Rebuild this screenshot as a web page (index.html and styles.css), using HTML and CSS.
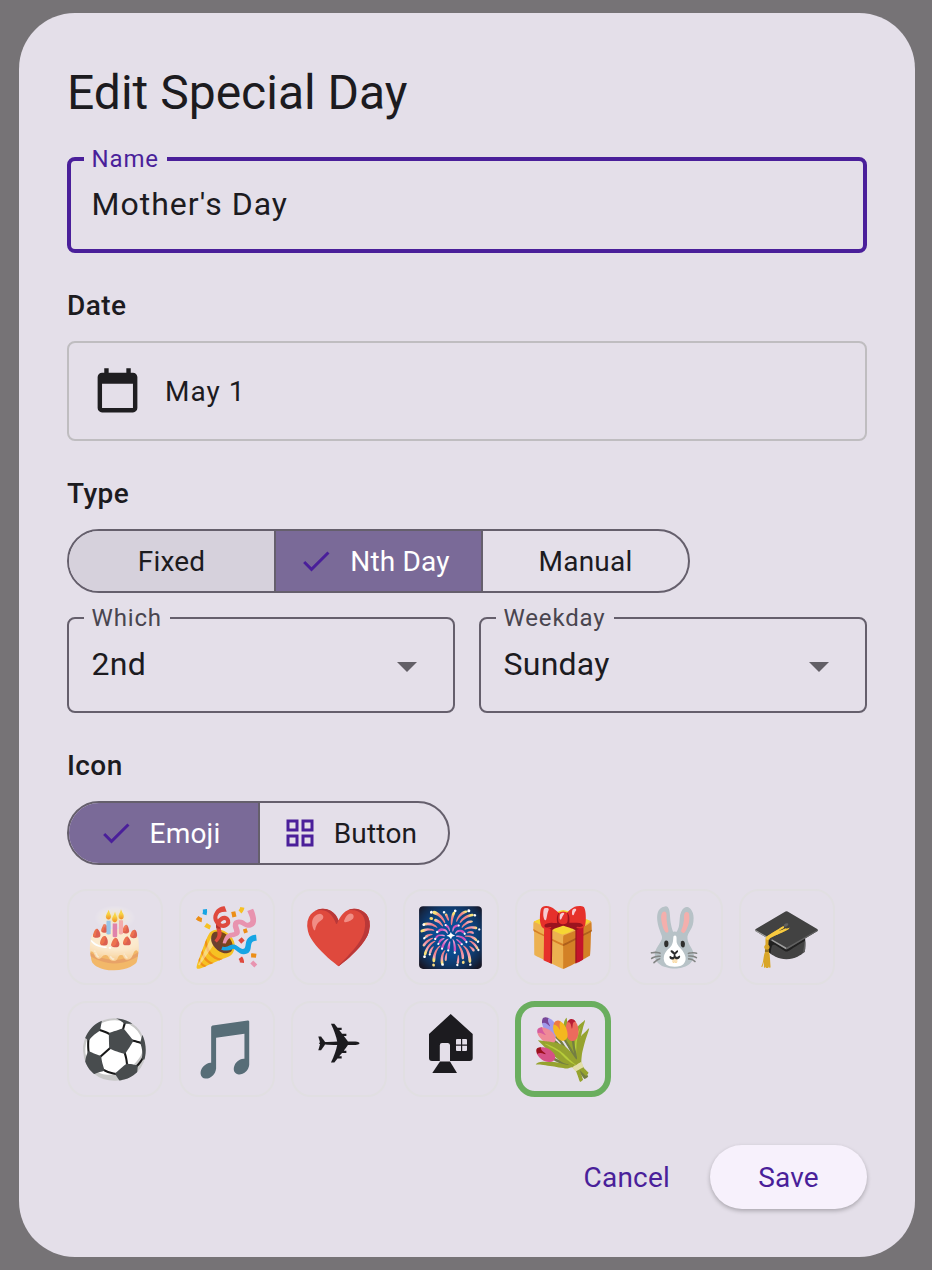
FILE: index.html
```html
<!DOCTYPE html>
<html>
<head>
<meta charset="utf-8">
<link rel="stylesheet" href="styles.css">
</head>
<body>
<div class="dialog">
    <h1 class="title">Edit Special Day</h1>

    <div class="field focused">
        <span class="field-label">Name</span>
        <span class="field-value spaced">Mother's Day</span>
    </div>

    <h2 class="section">Date</h2>
    <div class="date-box">
        <svg class="cal" viewBox="0 0 24 24"><path d="M19 3h-1V1h-2v2H8V1H6v2H5c-1.1 0-2 .9-2 2v14c0 1.1.9 2 2 2h14c1.1 0 2-.9 2-2V5c0-1.1-.9-2-2-2zm0 16H5V8h14v11z"/></svg>
        <span class="date-text">May 1</span>
    </div>

    <h2 class="section">Type</h2>
    <div class="segments">
        <div class="seg seg-fixed tinted">Fixed</div>
        <div class="seg seg-nth active has-icon">
            <svg class="check" viewBox="0 0 24 24" width="36" height="36"><path d="M9 16.17 4.83 12l-1.42 1.41L9 19 21 7l-1.41-1.41z"/></svg>
            Nth Day
        </div>
        <div class="seg seg-manual">Manual</div>
    </div>

    <div class="selects">
        <div class="field">
            <span class="field-label">Which</span>
            <span class="field-value">2nd</span>
            <span class="arrow"></span>
        </div>
        <div class="field">
            <span class="field-label">Weekday</span>
            <span class="field-value">Sunday</span>
            <span class="arrow"></span>
        </div>
    </div>

    <h2 class="section">Icon</h2>
    <div class="segments">
        <div class="seg seg-emoji active has-icon">
            <svg class="check" viewBox="0 0 24 24" width="36" height="36"><path d="M9 16.17 4.83 12l-1.42 1.41L9 19 21 7l-1.41-1.41z"/></svg>
            Emoji
        </div>
        <div class="seg seg-button has-icon">
            <svg class="grid" viewBox="0 0 24 24" width="36" height="36"><path d="M3 3v8h8V3H3zm6 6H5V5h4v4zm-6 4v8h8v-8H3zm6 6H5v-4h4v4zm4-16v8h8V3h-8zm6 6h-4V5h4v4zm-6 4v8h8v-8h-8zm6 6h-4v-4h4v4z"/></svg>
            Button
        </div>
    </div>

    <div class="tiles">
        <div class="tile"><span class="emoji">🎂</span></div>
        <div class="tile"><span class="emoji">🎉</span></div>
        <div class="tile"><span class="emoji">❤️</span></div>
        <div class="tile"><span class="emoji">🎆</span></div>
        <div class="tile"><span class="emoji">🎁</span></div>
        <div class="tile"><span class="emoji">🐰</span></div>
        <div class="tile"><span class="emoji">🎓</span></div>
        <div class="tile"><span class="emoji">⚽</span></div>
        <div class="tile"><span class="emoji">🎵</span></div>
        <div class="tile plane">&#x2708;&#xFE0E;</div>
        <div class="tile">
            <svg class="house" viewBox="0 0 44 59" width="44" height="59"><path fill-rule="evenodd" d="M21.7 0 43.7 20V44a3 3 0 0 1-3 3H3a3 3 0 0 1-3-3V20zM13 29a2.2 2.2 0 0 0-2.2 2.2V47H21V31.2A2.2 2.2 0 0 0 19 29zM27 26v4.6h5V25h-4a1 1 0 0 0-1 1zm6.2-1v5.6H38V26a1 1 0 0 0-1-1zM27 31.8V36a1 1 0 0 0 1 1h4v-5.200zm6.2 0V37H37a1 1 0 0 0 1-1v-4.200z"/><path d="M11 47.500H21L28 59H3.300z"/></svg>
        </div>
        <div class="tile picked"><span class="emoji">💐</span></div>
    </div>

    <div class="actions">
        <div class="btn-text">Cancel</div>
        <div class="btn-save">Save</div>
    </div>
</div>
</body>
</html>
```

FILE: styles.css
```css
html, body {
    margin: 0;
    height: 100%;
}
body {
    background-color: #767376;
    font-family: Roboto, "Liberation Sans", sans-serif;
    color: #1c1b1f;
    padding: 13px 17px 13px 19px;
    box-sizing: border-box;
}
.dialog {
    background-color: #e4dfe9;
    border-radius: 56px;
    height: 1244px;
    padding: 48px;
    box-sizing: border-box;
}
.title {
    font-size: 48px;
    font-weight: 400;
    line-height: 64px;
    margin: 0 0 32px 0;
}
.field {
    position: relative;
    height: 96px;
    border: 2px solid #655f6c;
    border-radius: 8px;
    box-sizing: border-box;
    padding: 0 22.5px;
    display: flex;
    align-items: center;
    flex: 1;
}
.field.focused {
    border: 4px solid #4a1f9a;
    padding: 0 20.5px;
}
.field-label {
    position: absolute;
    left: 14.5px;
    top: -14px;
    padding: 0 8px;
    background-color: #e4dfe9;
    font-size: 24px;
    line-height: 26px;
    letter-spacing: 0.85px;
    color: #49454f;
}
.focused .field-label {
    left: 12.5px;
    top: -15px;
    color: #4a1f9a;
}
.field-value {
    font-size: 32px;
    letter-spacing: 0.25px;
    margin-bottom: 2px;
}
.spaced {
    letter-spacing: 1px;
}
.section {
    font-size: 28px;
    font-weight: 500;
    line-height: 36px;
    letter-spacing: 0.4px;
    margin: 35px 0 17px 0;
}
.date-box {
    height: 100px;
    border: 2px solid #bfbdc0;
    border-radius: 8px;
    box-sizing: border-box;
    display: flex;
    align-items: center;
    padding-left: 22px;
}
.cal {
    fill: #1f1e21;
    margin-right: 21px;
    margin-top: 3px;
    width: 53px;
    height: 53px;
}
.date-text {
    font-size: 28px;
    letter-spacing: 1px;
}
.segments {
    display: inline-flex;
    height: 64px;
    border: 2px solid #655f6c;
    border-radius: 32px;
    box-sizing: border-box;
    overflow: hidden;
    vertical-align: top;
}
.seg {
    display: flex;
    align-items: center;
    justify-content: center;
    font-size: 28px;
    letter-spacing: 0.2px;
    border-left: 2px solid #655f6c;
    box-sizing: content-box;
}
.seg:first-child {
    border-left: 0;
}
.seg.has-icon {
    box-sizing: border-box;
    padding-right: 9px;
}
.seg-fixed { width: 205px; }
.seg-nth { width: 207px; }
.seg-manual { width: 205px; }
.seg-emoji { width: 189px; }
.seg-button { width: 190px; }
.seg.tinted {
    background-color: #d6d1dc;
}
.seg.active {
    background-color: #7a6a98;
    color: #ffffff;
}
.check {
    fill: #4a1f9a;
    margin-right: 16px;
}
.grid {
    fill: #4a1f9a;
    margin-right: 16px;
}
.selects {
    display: flex;
    gap: 24px;
    margin-top: 24px;
}
.arrow {
    position: absolute;
    right: 36px;
    top: 43px;
    width: 0;
    height: 0;
    border-left: 10px solid transparent;
    border-right: 10px solid transparent;
    border-top: 10px solid #625f66;
}
.tiles {
    display: grid;
    grid-template-columns: repeat(7, 96px);
    grid-auto-rows: 96px;
    gap: 16px;
    margin-top: 24px;
}
.tile {
    border: 2px solid #e1dfe2;
    border-radius: 20px;
    box-sizing: border-box;
    display: flex;
    align-items: center;
    justify-content: center;
    font-size: 57px;
    font-family: "Noto Color Emoji", sans-serif;
    line-height: 1;
}
.emoji {
    filter: saturate(0.85);
}
.tile.picked {
    border: 6px solid #6aae5e;
}
.tile.plane {
    font-family: "DejaVu Sans", sans-serif;
    font-size: 57px;
    color: #1c1b1f;
    padding-bottom: 10px;
}
.house {
    fill: #1c1b1f;
    margin-bottom: 11px;
}
.actions {
    display: flex;
    justify-content: flex-end;
    align-items: center;
    gap: 40px;
    margin-top: 48px;
}
.btn-text, .btn-save {
    font-size: 28px;
    color: #4a1f9a;
    letter-spacing: 0.2px;
}
.btn-save {
    background-color: #f7f1fc;
    height: 64px;
    width: 157px;
    border-radius: 32px;
    display: flex;
    align-items: center;
    justify-content: center;
    box-shadow: 0 2px 4px rgba(0, 0, 0, 0.25);
}
```
